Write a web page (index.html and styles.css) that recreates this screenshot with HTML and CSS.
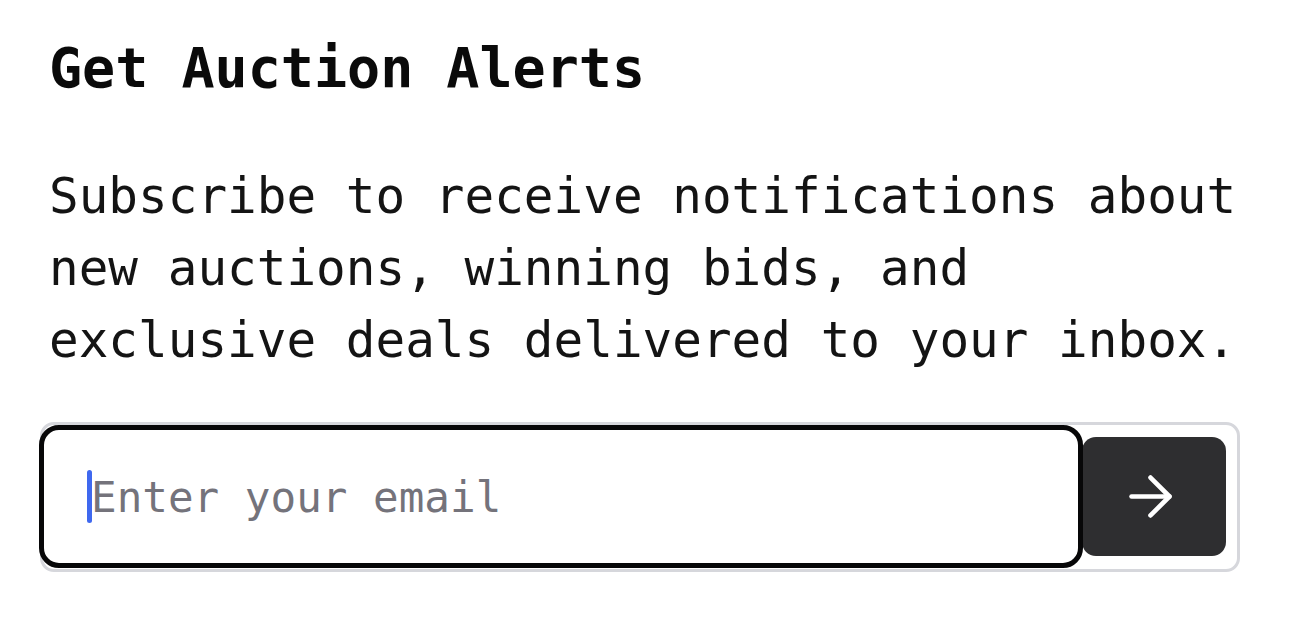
FILE: index.html
```html
<!DOCTYPE html>
<html lang="en">
<head>
<meta charset="utf-8">
<title>Get Auction Alerts</title>
<link rel="stylesheet" href="styles.css">
</head>
<body>
<section class="alerts">
  <h1 class="alerts-title">Get Auction Alerts</h1>
  <p class="alerts-text">Subscribe to receive notifications about new auctions, winning bids, and exclusive deals delivered to your inbox.</p>
  <form class="signup">
    <label class="signup-input">
      <span class="caret"></span>
      <input type="email" class="email" placeholder="Enter your email">
    </label>
    <button type="button" class="signup-btn" aria-label="Subscribe">
      <svg class="arrow" viewBox="0 0 24 24" width="65" height="65" fill="none" stroke="currentColor" stroke-width="1.7" stroke-linecap="round" stroke-linejoin="round"><path d="M5 12h14"/><path d="M12 5l7 7-7 7"/></svg>
    </button>
  </form>
</section>
</body>
</html>
```
FILE: styles.css
```css
* { box-sizing: border-box; }

body {
  margin: 0;
  background: #ffffff;
  font-family: "DejaVu Sans Mono", "Liberation Mono", monospace;
  color: #111111;
}

.alerts {
  padding: 35px 40px 0 40px;
  width: 1290px;
}

.alerts-title {
  margin: 0 0 59px 9px;
  font-size: 55px;
  line-height: 66px;
  font-weight: 700;
  color: #0a0a0a;
}

.alerts-text {
  margin: 0 0 46px 9px;
  font-size: 49.3px;
  line-height: 72px;
  font-weight: 400;
  color: #141414;
}

.signup {
  display: flex;
  width: 1200px;
  height: 150px;
  border: 3px solid #d6d7dc;
  border-radius: 14px;
  padding: 12px 11px 13px 0;
}

.signup-input {
  position: relative;
  z-index: 1;
  flex: 1;
  display: flex;
  align-items: center;
  margin: -12px -1px -12px -4px;
  padding-left: 43px;
  background: #ffffff;
  border: 5px solid #070708;
  border-radius: 20px;
}

.caret {
  flex: none;
  width: 5px;
  height: 53px;
  margin-right: -1px;
  border-radius: 3px;
  background: #3f68ef;
}

.email {
  flex: 1;
  min-width: 0;
  border: 0;
  outline: none;
  padding: 0;
  background: transparent;
  font-family: "DejaVu Sans Mono", "Liberation Mono", monospace;
  font-size: 42.6px;
  color: #111111;
}

.email::placeholder {
  color: #74737b;
  opacity: 1;
}

.signup-btn {
  flex: none;
  width: 144px;
  display: flex;
  align-items: center;
  justify-content: center;
  padding: 0;
  border: 0;
  border-radius: 14px;
  background: #2e2e30;
  color: #ffffff;
}

.arrow {
  display: block;
  margin-left: -8px;
}
```
